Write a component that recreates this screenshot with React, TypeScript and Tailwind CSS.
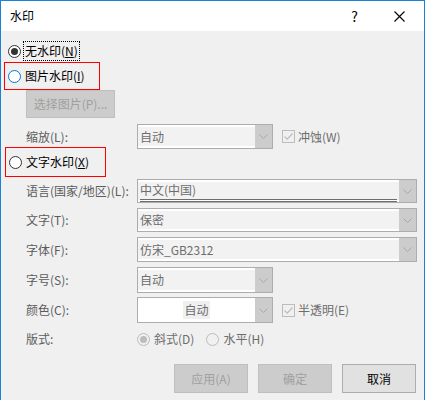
import React from 'react'

const font = { fontFamily: '"Microsoft YaHei UI", "Noto Sans CJK SC", "Noto Sans", sans-serif' }

function Radio({ checked, disabled, hover }: { checked?: boolean; disabled?: boolean; hover?: boolean }) {
  const ring = disabled ? 'border-[#bcbcbc] bg-[#f0f0f0]' : hover ? 'border-[#0078d7] bg-white' : 'border-[#333333] bg-white'
  return (
    <span className={`w-[13px] h-[13px] rounded-full border ${ring} flex items-center justify-center shrink-0`}>
      {checked && <span className={`w-[7px] h-[7px] rounded-full ${disabled ? 'bg-[#bcbcbc]' : 'bg-[#333333]'}`} />}
    </span>
  )
}

function Check() {
  return (
    <span className="w-[13px] h-[13px] border border-[#bcbcbc] bg-[#f0f0f0] flex items-center justify-center shrink-0">
      <svg width="11" height="11" viewBox="0 0 11 11">
        <path d="M1.5 5.5 L4.2 8.2 L9.5 2.5" fill="none" stroke="#bcbcbc" strokeWidth="1.2" />
      </svg>
    </span>
  )
}

function Chevron() {
  return (
    <span className="w-[17px] h-full bg-[#cccccc] flex items-center justify-center shrink-0">
      <svg width="9" height="5" viewBox="0 0 9 5">
        <path d="M0.5 0.5 L4.5 4.5 L8.5 0.5" fill="none" stroke="#a8a8a8" strokeWidth="1" />
      </svg>
    </span>
  )
}

function Select({ value, wide, white, center, underline }: { value: string; wide?: boolean; white?: boolean; center?: boolean; underline?: boolean }) {
  return (
    <div
      className={`${wide ? 'w-[280px]' : 'w-[136px]'} h-full border border-[#adadad] flex ${white ? 'bg-white' : 'bg-[#f2f2f2] shadow-[inset_0_2px_0_#ffffff,inset_0_-2px_0_#ffffff]'}`}
    >
      <div className={`flex-1 flex items-center px-[2px] ${center ? 'justify-center' : ''}`}>
        <span
          className={`text-[12px] text-[#6d6d6d] leading-[18px] ${center ? 'bg-[#f0f0f0] px-[1px]' : 'flex-1'} ${underline ? 'border-b-[3px] border-double border-[#6d6d6d]' : ''}`}
        >
          {value}
        </span>
      </div>
      <Chevron />
    </div>
  )
}

function Row({ label, children, mt, h }: { label: string; children: React.ReactNode; mt: string; h: string }) {
  return (
    <div className={`flex items-center ${mt} ${h} pl-[25px]`}>
      <span className="w-[111px] text-[12px] text-[#5c5c5c]">{label}</span>
      <div className="h-full flex items-center gap-[9px]">{children}</div>
    </div>
  )
}

function Btn({ label, disabled }: { label: string; disabled?: boolean }) {
  return (
    <div
      className={`w-[74px] h-[29px] border flex items-center justify-center text-[12px] ${
        disabled ? 'bg-[#cccccc] border-[#bfbfbf] text-[#a0a0a0]' : 'bg-[#e1e1e1] border-[#adadad] text-black'
      }`}
    >
      {label}
    </div>
  )
}

export default function App() {
  return (
    <div className="w-[427px] h-[400px] bg-white" style={font}>
      <div className="w-[425px] h-[400px] border-t border-l border-r border-[#1883d7] flex flex-col">
        {/* Title */}
        <div className="h-[30px] bg-white flex items-center shrink-0">
          <span className="ml-[9px] text-[12px] text-black">水印</span>
          <span className="ml-auto text-[14px] text-black mr-[36px]">?</span>
          <svg width="11" height="11" viewBox="0 0 11 11" className="mr-[19px]">
            <path d="M0.5 0.5 L10.5 10.5 M10.5 0.5 L0.5 10.5" stroke="#000" strokeWidth="1.1" />
          </svg>
        </div>

        {/* Body */}
        <div className="flex-1 bg-[#f0f0f0] flex flex-col">
          <div className="mt-[10px] h-[20px] flex items-center pl-[7px]">
            <Radio checked />
            <span className="ml-[2px] h-[20px] px-[1px] border border-dotted border-black flex items-center text-[12px] text-black">
              无水印(<span className="underline">N</span>)
            </span>
          </div>

          <div className="mt-[1px] ml-[3px] w-[96px] h-[28px] border border-[#ff0000] flex items-center pl-[3px]">
            <Radio hover />
            <span className="ml-[4px] text-[12px] text-black">
              图片水印(<span className="underline">I</span>)
            </span>
          </div>

          <div className="ml-[25px] w-[89px] h-[28px] bg-[#cccccc] border border-[#bfbfbf] flex items-center justify-center text-[12px] text-[#a0a0a0]">
            选择图片(P)...
          </div>

          <Row label="缩放(L):" mt="mt-[6px]" h="h-[25px]">
            <Select value="自动" />
            <span className="flex items-center gap-[3px] text-[12px] text-[#6d6d6d]">
              <Check />
              冲蚀(W)
            </span>
          </Row>

          <div className="mt-[-2px] ml-[4px] w-[101px] h-[30px] border border-[#ff0000] flex items-center pl-[3px]">
            <Radio />
            <span className="ml-[4px] text-[12px] text-black">
              文字水印(<span className="underline">X</span>)
            </span>
          </div>

          <Row label="语言(国家/地区)(L):" mt="mt-[2px]" h="h-[24px]">
            <Select value="中文(中国)" wide underline />
          </Row>
          <Row label="文字(T):" mt="mt-[5px]" h="h-[24px]">
            <Select value="保密" wide />
          </Row>
          <Row label="字体(F):" mt="mt-[5px]" h="h-[25px]">
            <Select value="仿宋_GB2312" wide />
          </Row>
          <Row label="字号(S):" mt="mt-[5px]" h="h-[26px]">
            <Select value="自动" />
          </Row>
          <Row label="颜色(C):" mt="mt-[4px]" h="h-[26px]">
            <Select value="自动" white center />
            <span className="flex items-center gap-[3px] text-[12px] text-[#6d6d6d]">
              <Check />
              半透明(E)
            </span>
          </Row>
          <Row label="版式:" mt="mt-[7px]" h="h-[18px]">
            <span className="flex items-center gap-[4px] text-[12px] text-[#6d6d6d]">
              <Radio checked disabled />
              斜式(D)
            </span>
            <span className="flex items-center gap-[4px] ml-[3px] text-[12px] text-[#6d6d6d]">
              <Radio disabled />
              水平(H)
            </span>
          </Row>

          <div className="mt-[16px] flex gap-[10px] pl-[173px]">
            <Btn label="应用(A)" disabled />
            <Btn label="确定" disabled />
            <Btn label="取消" />
          </div>
        </div>
      </div>
    </div>
  )
}
